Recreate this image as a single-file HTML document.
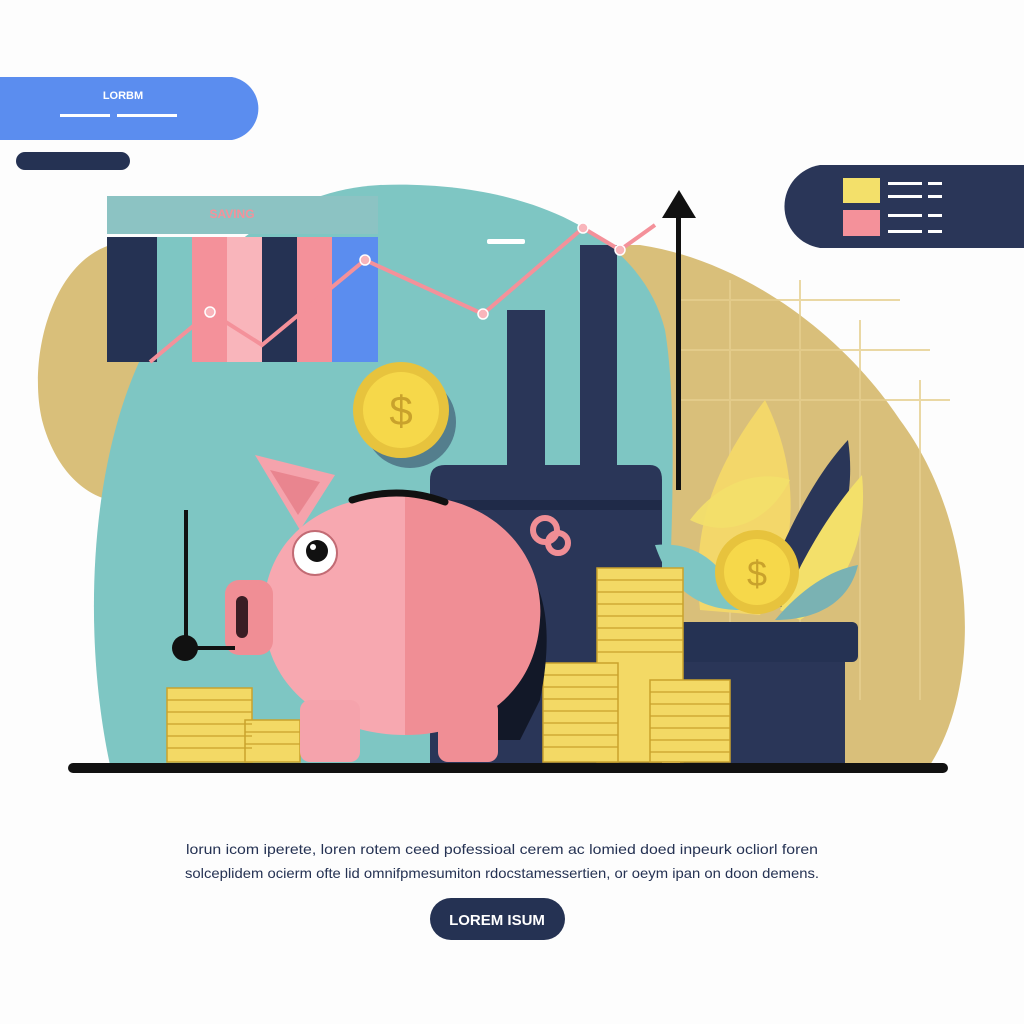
<!DOCTYPE html>
<html><head><meta charset="utf-8"><style>
html,body{margin:0;padding:0;background:#fdfdfd;}
svg{display:block}
text{font-family:"Liberation Sans",sans-serif}
</style></head><body>
<svg width="1024" height="1024" viewBox="0 0 1024 1024" xmlns="http://www.w3.org/2000/svg">
<rect width="1024" height="1024" fill="#fdfdfd"/>
<path d="M0 77 H232 A32 32 0 0 1 232 140 H0Z" fill="#5b8def"/>
<text x="123" y="99" font-size="11" fill="#fff" text-anchor="middle" font-weight="bold">LORBM</text>
<rect x="60" y="114" width="50" height="3" fill="#fff"/><rect x="117" y="114" width="60" height="3" fill="#fff"/>
<rect x="16" y="152" width="114" height="18" rx="9" fill="#253253"/>
<path d="M1024 165 H820 A42 42 0 0 0 820 248 H1024Z" fill="#2a3658"/>
<rect x="843" y="178" width="37" height="25" fill="#f3e06a"/>
<rect x="843" y="210" width="37" height="26" fill="#f4919a"/>
<g fill="#fff"><rect x="888" y="182" width="34" height="3"/><rect x="928" y="182" width="14" height="3"/><rect x="888" y="195" width="34" height="3"/><rect x="928" y="195" width="14" height="3"/><rect x="888" y="214" width="34" height="3"/><rect x="928" y="214" width="14" height="3"/><rect x="888" y="230" width="34" height="3"/><rect x="928" y="230" width="14" height="3"/></g>
<!-- gold blob -->
<path d="M110 245 C50 265 28 360 42 420 C55 470 85 495 110 500 L100 650 L660 760 L930 765 C985 680 975 520 900 420 C840 330 740 260 640 245 Z" fill="#d9bf7a"/>
<g stroke="#e6cf8e" stroke-width="2" opacity="0.8"><line x1="680" y1="300" x2="900" y2="300"/><line x1="680" y1="350" x2="930" y2="350"/><line x1="680" y1="400" x2="950" y2="400"/><line x1="730" y1="280" x2="730" y2="700"/><line x1="800" y1="280" x2="800" y2="700"/><line x1="860" y1="320" x2="860" y2="700"/><line x1="920" y1="380" x2="920" y2="700"/></g>
<!-- teal blob -->
<path d="M380 185 C520 180 640 230 665 330 C680 420 670 600 660 765 H110 C85 650 85 480 140 360 C200 260 280 190 380 185Z" fill="#7ec6c3"/>
<rect x="107" y="196" width="271" height="38" fill="#8cc3c3"/>
<text x="232" y="218" font-size="12" fill="#f4919a" text-anchor="middle" font-weight="bold">SAVING</text>
<rect x="107" y="237" width="50" height="125" fill="#253253"/>
<rect x="157" y="237" width="35" height="125" fill="#7ec6c3"/>
<rect x="192" y="237" width="35" height="125" fill="#f4919a"/>
<rect x="227" y="237" width="35" height="125" fill="#f9b5bb"/>
<rect x="262" y="237" width="35" height="125" fill="#253253"/>
<rect x="297" y="237" width="35" height="125" fill="#f4919a"/>
<rect x="332" y="237" width="46" height="125" fill="#5b8def"/>
<rect x="487" y="239" width="38" height="5" rx="2" fill="#fff"/>
<rect x="507" y="310" width="38" height="170" fill="#2a3658"/>
<rect x="580" y="245" width="37" height="235" fill="#2a3658"/>
<polyline points="150,362 210,312 262,345 365,260 483,314 583,228 620,250 655,225" fill="none" stroke="#f4919a" stroke-width="4"/>
<g fill="#f9b5bb" stroke="#fff" stroke-width="1.5"><circle cx="210" cy="312" r="5"/><circle cx="365" cy="260" r="5"/><circle cx="483" cy="314" r="5"/><circle cx="583" cy="228" r="5"/><circle cx="620" cy="250" r="5"/></g>
<rect x="676" y="215" width="5" height="275" fill="#111"/>
<polygon points="662,218 679,190 696,218" fill="#111"/>
<path d="M430 480 Q430 465 445 465 H650 Q662 465 662 480 V765 H430Z" fill="#2a3658"/>
<rect x="430" y="500" width="232" height="10" fill="#1f2a48"/>
<circle cx="410" cy="422" r="46" fill="#2a3658" opacity="0.5"/>
<circle cx="401" cy="410" r="48" fill="#e7c33d"/><circle cx="401" cy="410" r="38" fill="#f6d84a"/>
<text x="401" y="425" font-size="42" fill="#c9a22c" text-anchor="middle">$</text>
<path d="M700 610 C690 520 720 460 765 400 C800 470 800 550 760 615Z" fill="#f3d76a"/>
<path d="M760 600 C790 520 820 470 848 440 C860 520 820 580 790 610Z" fill="#2a3658"/>
<path d="M780 610 C810 540 840 500 862 475 C870 560 830 600 800 620Z" fill="#f3e06a"/>
<path d="M655 545 C700 540 730 570 740 610 C700 610 670 590 655 545Z" fill="#7ec6c3"/>
<path d="M775 620 C800 590 830 570 858 565 C850 600 820 620 775 620Z" fill="#7ab2b3"/>
<path d="M690 520 C720 480 760 470 790 480 C770 520 730 540 690 520Z" fill="#f3e06a" opacity=".9"/>
<rect x="680" y="660" width="165" height="105" fill="#2a3658"/>
<rect x="672" y="622" width="186" height="40" rx="6" fill="#253253"/>
<circle cx="757" cy="572" r="42" fill="#e7c33d"/><circle cx="757" cy="572" r="33" fill="#f6d84a"/>
<text x="757" y="586" font-size="36" fill="#c9a22c" text-anchor="middle">$</text>
<g fill="#f3d965" stroke="#c9a22c" stroke-width="1.5">
<rect x="167" y="688" width="85" height="74"/><rect x="245" y="720" width="55" height="42"/>
<rect x="597" y="568" width="86" height="194"/><rect x="543" y="663" width="75" height="99"/><rect x="650" y="680" width="80" height="82"/>
</g>
<g stroke="#c9a22c" stroke-width="1.2">
<path d="M167 700H252M167 712H252M167 724H252M167 736H252M167 748H252M245 732H300M245 744H300M597 580H683M597 592H683M597 604H683M597 616H683M597 628H683M597 640H683M597 652H683M543 675H618M543 687H618M543 699H618M543 711H618M543 723H618M543 735H618M543 747H618M650 692H730M650 704H730M650 716H730M650 728H730M650 740H730M650 752H730"/>
</g>
<path d="M520 560 Q560 600 540 700 L520 740 L470 740 Z" fill="#121828"/>
<path d="M255 455 L335 475 L300 530 Z" fill="#f5a3ac"/>
<path d="M270 470 L320 482 L298 515Z" fill="#e9858f"/>
<path d="M405 495 C300 495 255 560 265 630 C275 700 340 735 405 735 Z" fill="#f7a8b0"/>
<path d="M405 495 C500 495 545 560 540 620 C535 700 470 735 405 735 Z" fill="#f08e95"/>
<rect x="300" y="700" width="60" height="62" rx="10" fill="#f5a3ac"/>
<rect x="438" y="700" width="60" height="62" rx="10" fill="#f08e95"/>
<rect x="225" y="580" width="48" height="75" rx="14" fill="#f08e95"/>
<rect x="236" y="596" width="12" height="42" rx="6" fill="#3a1d24"/>
<circle cx="315" cy="553" r="22" fill="#fff" stroke="#c26b74" stroke-width="2"/>
<circle cx="317" cy="551" r="11" fill="#111"/><circle cx="313" cy="547" r="3" fill="#fff"/>
<path d="M352 500 Q400 485 445 502" fill="none" stroke="#111" stroke-width="7" stroke-linecap="round"/>
<g fill="none" stroke="#f08e95" stroke-width="6"><circle cx="545" cy="530" r="12"/><circle cx="558" cy="543" r="10"/></g>
<rect x="184" y="510" width="4" height="138" fill="#111"/>
<rect x="185" y="646" width="50" height="4" fill="#111"/>
<circle cx="185" cy="648" r="13" fill="#111"/>
<rect x="68" y="763" width="880" height="10" rx="5" fill="#111"/>
<text x="502" y="854" font-size="14" fill="#253253" text-anchor="middle" textLength="632" lengthAdjust="spacingAndGlyphs">lorun icom  iperete, loren rotem  ceed  pofessioal  cerem ac lomied doed  inpeurk  ocliorl  foren</text>
<text x="502" y="878" font-size="14" fill="#253253" text-anchor="middle" textLength="634" lengthAdjust="spacingAndGlyphs">solceplidem ocierm ofte lid omnifpmesumiton rdocstamessertien, or oeym  ipan on doon demens.</text>
<rect x="430" y="898" width="135" height="42" rx="21" fill="#253253"/>
<text x="497" y="925" font-size="15" fill="#fff" text-anchor="middle" font-weight="bold">LOREM ISUM</text>
</svg>
</body></html>
